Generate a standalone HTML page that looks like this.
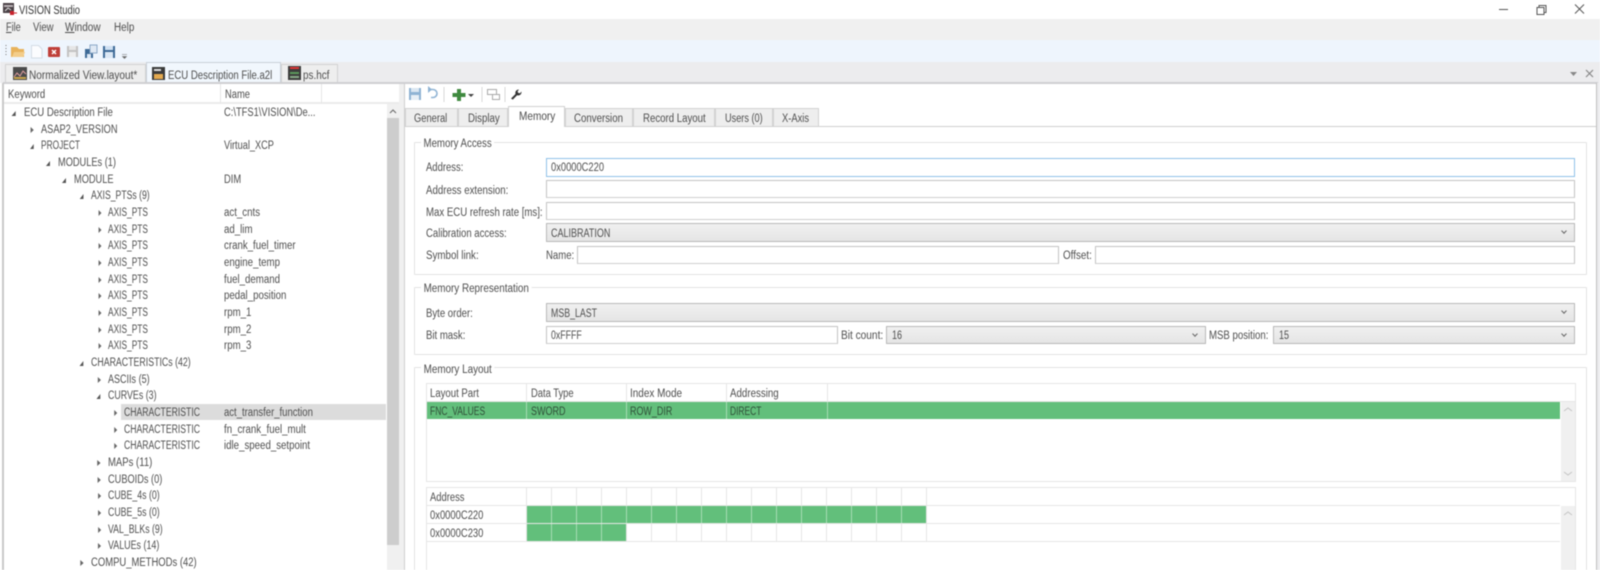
<!DOCTYPE html>
<html><head><meta charset="utf-8"><title>VISION Studio</title>
<style>
html,body{margin:0;padding:0;width:1600px;height:570px;overflow:hidden;background:#fff}
body{position:relative;font-family:"Liberation Sans",sans-serif;font-size:11.5px;color:#4e4e4e}
div,svg{position:absolute;box-sizing:border-box}
#w{left:0;top:0;width:1600px;height:570px;overflow:hidden;filter:blur(.4px)}
.t{height:16px;line-height:16px;margin-top:.8px;white-space:nowrap;transform:scaleX(calc(var(--s,.87)*.9565));transform-origin:0 50%}
.r::before{content:"";position:absolute;width:0;height:0}
.c::before{left:-13px;top:5px;border-left:4px solid #666;border-top:3px solid transparent;border-bottom:3px solid transparent}
.e::before{left:-15px;top:6px;border-bottom:5px solid #555;border-left:5px solid transparent}
.n{--s:.88}
.in{background:#fff;border:1px solid #c4c4c4;border-bottom-color:#cfcfcf}
.cb{background:linear-gradient(#f0f0f0,#e5e5e5);border:1px solid #b9b9b9}
.cb::after{content:"";position:absolute;right:8px;top:5px;width:3px;height:3px;border-right:1px solid #666;border-bottom:1px solid #666;transform:rotate(45deg)}
.g{border:1px solid #e3e3e3;border-radius:1px}
.gt{background:#fff;padding:0 3px}
.tab{background:#eeeeee;border:1px solid #d2d2d2;border-bottom:0;text-align:center}
.ln{background:#e6e6e6}
.vl{background:#e6e6e6;width:1px}
</style></head><body><div id="w">

<!-- title bar -->
<svg style="left:2px;top:1px" width="16" height="16" viewBox="0 0 16 16"><rect x="1" y="2" width="11" height="10" fill="#4a4146"/><rect x="2" y="4" width="9" height="2" fill="#b9b2b5"/><path d="M3 10 L6 7 L9 9" stroke="#ddd" fill="none"/><rect x="8" y="10" width="4" height="4" fill="#c8232c"/><path d="M12 12h3" stroke="#c8232c"/></svg>
<div class="t" style="left:19px;top:2px;color:#333;--s:.853">VISION Studio</div>
<svg style="left:1490px;top:3px" width="106" height="14" viewBox="0 0 106 14"><path d="M9 6.500H18" stroke="#555" fill="none"/><path d="M47 4.500h7v7h-7zM49 4.500V2.500h7v7h-2" stroke="#555" fill="none"/><path d="M85 1.500l9 9M94 1.500l-9 9" stroke="#555" fill="none"/></svg>

<!-- menu -->
<div style="left:0;top:19px;width:1600px;height:21px;background:#f0f0f0"></div>
<div class="t" style="left:6px;top:19px;--s:.83"><u>F</u>ile</div>
<div class="t" style="left:32.700px;top:19px;--s:.868">View</div>
<div class="t" style="left:65.300px;top:19px;--s:.91"><u>W</u>indow</div>
<div class="t" style="left:113.700px;top:19px;--s:.898">Help</div>

<!-- toolbar -->
<div style="left:0;top:40px;width:1600px;height:22px;background:#eef5fd"></div>
<svg style="left:4px;top:42px" width="126" height="18" viewBox="0 0 126 18">
<path d="M2 3v1M2 6v1M2 9v1M2 12v1" stroke="#777" fill="none"/>
<path d="M7 5h6l2 2h5v8H7z" fill="#e8b35c"/><path d="M8 15l2-5h11l-2 5z" fill="#f3cd8a"/>
<path d="M27.500 3.500h7l3.500 3.500v9H27.500z" fill="#fbfcfe" stroke="#d4dce5"/>
<rect x="44" y="5" width="12" height="10" rx="1" fill="#bf3f39"/><path d="M48 8l4 4M52 8l-4 4" stroke="#fff" stroke-width="1.500"/>
<path d="M63 4h11v11H63z" fill="#c2c2c2"/><rect x="65" y="4" width="7" height="4" fill="#e6e6e6"/><rect x="65" y="10" width="7" height="5" fill="#eee"/>
<path d="M81 7h8v9H81z" fill="#3d6a96"/><rect x="83" y="12" width="4" height="4" fill="#dce8f5"/><rect x="86" y="3" width="7" height="8" fill="#dfe9f4" stroke="#8ba8c6"/>
<path d="M99 4h12v12H99z" fill="#3d6a96"/><rect x="101" y="4" width="8" height="4" fill="#cfe0f2"/><rect x="101" y="10" width="8" height="6" fill="#dce8f5"/>
<path d="M118 12.500h5M118.500 14.500h4l-2 2z" fill="#666" stroke="#666" stroke-width=".6"/>
</svg>

<!-- doc tabs strip -->
<div style="left:0;top:62px;width:1600px;height:21px;background:#ececee"></div>
<div class="tab" style="left:5px;top:64px;width:141px;height:19px"></div>
<div style="left:146px;top:62px;width:135px;height:22px;background:#f1f7fd;border:1px solid #c9d0d8;border-bottom:0"></div>
<div class="tab" style="left:281px;top:64px;width:57px;height:19px"></div>
<svg style="left:13px;top:67px" width="15" height="14"><rect width="14" height="13" y="0" fill="#4b4b4b"/><path d="M1 10L4 6l3 3 3-5 3 3" stroke="#e4a0a0" fill="none"/><rect x="1" y="10" width="12" height="2" fill="#c9a54b"/></svg>
<svg style="left:152px;top:67px" width="14" height="14"><rect width="13" height="13" fill="#3a3a3a"/><rect x="2" y="7" width="9" height="5" fill="#e3a94f"/><rect x="2" y="2" width="7" height="2" fill="#ddd"/></svg>
<svg style="left:288px;top:66px" width="14" height="15"><rect width="13" height="14" fill="#3c3c3c"/><rect x="2" y="1" width="9" height="2" fill="#d33"/><rect x="2" y="6" width="9" height="2" fill="#5c9a5c"/><rect x="2" y="10" width="9" height="2" fill="#8a8"/></svg>
<div class="t" style="left:29px;top:67px;--s:.915">Normalized View.layout*</div>
<div class="t" style="left:168px;top:67px">ECU Description File.a2l</div>
<div class="t" style="left:303px;top:67px;--s:.9">ps.hcf</div>
<svg style="left:1568px;top:68px" width="28" height="12"><path d="M2 4h7L5.500 8z" fill="#888"/><path d="M18 2l7 7M25 2l-7 7" stroke="#888" stroke-width="1.200" fill="none"/></svg>

<!-- main frame -->
<div style="left:3px;top:82px;width:1595px;height:2px;background:#cfcfd2"></div>
<div style="left:2px;top:83px;width:2px;height:487px;background:#c9c9c9"></div>
<div style="left:1596px;top:83px;width:1px;height:487px;background:#c0c0c0"></div>
<div style="left:1597px;top:83px;width:3px;height:487px;background:#ececee"></div>

<!-- tree header -->
<div style="left:4px;top:102px;width:395px;height:2px;background:#ebebeb"></div>
<div class="vl" style="left:220px;top:84px;height:19px"></div>
<div class="vl" style="left:321px;top:84px;height:19px"></div>
<div class="t" style="left:8px;top:86px">Keyword</div>
<div class="t" style="left:225px;top:86px;--s:.85">Name</div>

<!-- scrollbar -->
<div style="left:387px;top:104px;width:12px;height:466px;background:#f0f0f0"></div>
<div style="left:387px;top:118px;width:12px;height:427px;background:#cdcdcd"></div>
<svg style="left:388px;top:108px" width="10" height="8"><path d="M2 5l3-3 3 3" stroke="#666" fill="none"/></svg>
<div style="left:399px;top:84px;width:5px;height:486px;background:#f0f0f0"></div>
<div style="left:404px;top:84px;width:1px;height:486px;background:#cfcfcf"></div>

<!-- selection -->
<div style="left:121px;top:404px;width:265px;height:16px;background:#dcdcdc"></div>

<!-- tree rows -->
<div class="t r e" style="left:24px;top:104.300px">ECU Description File</div><div class="t" style="left:224px;top:104.300px;--s:.85">C:\TFS1\VISION\De...</div>
<div class="t r c" style="left:41px;top:121px;--s:.84">ASAP2_VERSION</div>
<div class="t r e" style="left:41px;top:137.600px;--s:.76">PROJECT</div><div class="t" style="left:224px;top:137.600px;--s:.835">Virtual_XCP</div>
<div class="t r e" style="left:58px;top:154.300px;--s:.84">MODULEs (1)</div>
<div class="t r e" style="left:74px;top:171px;--s:.84">MODULE</div><div class="t" style="left:224px;top:171px;--s:.85">DIM</div>
<div class="t r e" style="left:91px;top:187.600px;--s:.787">AXIS_PTSs (9)</div>
<div class="t r c" style="left:108px;top:204.300px;--s:.76">AXIS_PTS</div><div class="t n" style="left:224px;top:204.300px">act_cnts</div>
<div class="t r c" style="left:108px;top:221px;--s:.76">AXIS_PTS</div><div class="t n" style="left:224px;top:221px">ad_lim</div>
<div class="t r c" style="left:108px;top:237.600px;--s:.76">AXIS_PTS</div><div class="t n" style="left:224px;top:237.600px">crank_fuel_timer</div>
<div class="t r c" style="left:108px;top:254.300px;--s:.76">AXIS_PTS</div><div class="t n" style="left:224px;top:254.300px">engine_temp</div>
<div class="t r c" style="left:108px;top:271px;--s:.76">AXIS_PTS</div><div class="t n" style="left:224px;top:271px">fuel_demand</div>
<div class="t r c" style="left:108px;top:287.600px;--s:.76">AXIS_PTS</div><div class="t n" style="left:224px;top:287.600px">pedal_position</div>
<div class="t r c" style="left:108px;top:304.300px;--s:.76">AXIS_PTS</div><div class="t n" style="left:224px;top:304.300px">rpm_1</div>
<div class="t r c" style="left:108px;top:321px;--s:.76">AXIS_PTS</div><div class="t n" style="left:224px;top:321px">rpm_2</div>
<div class="t r c" style="left:108px;top:337.600px;--s:.76">AXIS_PTS</div><div class="t n" style="left:224px;top:337.600px">rpm_3</div>
<div class="t r e" style="left:91px;top:354.300px;--s:.8">CHARACTERISTICs (42)</div>
<div class="t r c" style="left:108px;top:371px;--s:.82">ASCIIs (5)</div>
<div class="t r e" style="left:108px;top:387.600px;--s:.805">CURVEs (3)</div>
<div class="t r c" style="left:124px;top:404.300px;--s:.787">CHARACTERISTIC</div><div class="t n" style="left:224px;top:404.300px;--s:.865">act_transfer_function</div>
<div class="t r c" style="left:124px;top:421px;--s:.787">CHARACTERISTIC</div><div class="t n" style="left:224px;top:421px">fn_crank_fuel_mult</div>
<div class="t r c" style="left:124px;top:437.600px;--s:.787">CHARACTERISTIC</div><div class="t n" style="left:224px;top:437.600px">idle_speed_setpoint</div>
<div class="t r c" style="left:108px;top:454.300px;--s:.866">MAPs (11)</div>
<div class="t r c" style="left:108px;top:471px;--s:.838">CUBOIDs (0)</div>
<div class="t r c" style="left:108px;top:487.600px;--s:.798">CUBE_4s (0)</div>
<div class="t r c" style="left:108px;top:504.300px;--s:.798">CUBE_5s (0)</div>
<div class="t r c" style="left:108px;top:521px;--s:.794">VAL_BLKs (9)</div>
<div class="t r c" style="left:108px;top:537.600px;--s:.81">VALUEs (14)</div>
<div class="t r c" style="left:91px;top:554.300px;--s:.86">COMPU_METHODs (42)</div>

<!-- right toolbar -->
<svg style="left:408px;top:84px" width="120" height="22" viewBox="0 0 120 22">
<path d="M1 4h12v12H1z" fill="#8fb3d4"/><rect x="3" y="4" width="8" height="4" fill="#dbe7f2"/><rect x="3" y="11" width="8" height="5" fill="#e7eff6"/>
<path d="M21 5.500h4a4 4 0 0 1 0 8h-2" stroke="#8fb3d4" stroke-width="1.600" fill="none"/><path d="M20 2v7l4-3.500z" fill="#8fb3d4"/>
<path d="M36 3v15" stroke="#d8d8d8"/>
<path d="M49 5h4v4h4.500v4h-4.500v4h-4v-4h-4.500v-4h4.500z" fill="#3f8a3f"/>
<path d="M60 10h6l-3 3z" fill="#444"/>
<path d="M74 3v15" stroke="#d8d8d8"/>
<path d="M79.500 5.500h9v5h-9zM84.500 10.500h7v5h-7z" fill="#fff" stroke="#a9a9a9"/>
<path d="M97 3v15" stroke="#d8d8d8"/>
<path d="M103 14.500l4.500-4.500c-.7-2.300.8-4.500 3.500-4.500l-1.500 2 .8 1.500 1.700.3 1.500-1.800c.3 2.800-2 4.500-4.400 3.800l-4.300 4.300z" fill="#333"/>
</svg>

<!-- property tabs -->
<div style="left:405px;top:126px;width:1191px;height:1px;background:#d0d0d0"></div>
<div class="tab" style="left:405px;top:108px;width:53px;height:18px"></div>
<div class="tab" style="left:458px;top:108px;width:50px;height:18px"></div>
<div style="left:508px;top:106px;width:57px;height:21px;background:#fff;border:1px solid #d0d0d0;border-bottom:0"></div>
<div class="tab" style="left:565px;top:108px;width:68px;height:18px"></div>
<div class="tab" style="left:633px;top:108px;width:82px;height:18px"></div>
<div class="tab" style="left:715px;top:108px;width:58px;height:18px"></div>
<div class="tab" style="left:773px;top:108px;width:46px;height:18px"></div>
<div class="t" style="left:414px;top:110px;--s:.85">General</div>
<div class="t" style="left:467.700px;top:110px;--s:.88">Display</div>
<div class="t" style="left:518.700px;top:108px;--s:.914">Memory</div>
<div class="t" style="left:574px;top:110px;--s:.88">Conversion</div>
<div class="t" style="left:642.700px;top:110px;--s:.876">Record Layout</div>
<div class="t" style="left:725px;top:110px;--s:.833">Users (0)</div>
<div class="t" style="left:782px;top:110px;--s:.85">X-Axis</div>

<!-- group 1 -->
<div class="g" style="left:414px;top:142px;width:1173px;height:133px"></div>
<div class="gt t" style="left:421px;top:135px;--s:.878">Memory Access</div>
<div class="t" style="left:426px;top:159px;--s:.86">Address:</div>
<div class="in" style="left:546px;top:158px;width:1029px;height:19px;border-color:#8fc1e8"></div>
<div class="t" style="left:551px;top:159px;--s:.85">0x0000C220</div>
<div class="t" style="left:426px;top:182px;--s:.88">Address extension:</div>
<div class="in" style="left:546px;top:180px;width:1029px;height:18px"></div>
<div class="t" style="left:426px;top:204px;--s:.875">Max ECU refresh rate [ms]:</div>
<div class="in" style="left:546px;top:202px;width:1029px;height:18px"></div>
<div class="t" style="left:426px;top:225px;--s:.868">Calibration access:</div>
<div class="cb" style="left:546px;top:223px;width:1029px;height:19px"></div>
<div class="t" style="left:551px;top:225px;--s:.818">CALIBRATION</div>
<div class="t" style="left:426px;top:247px;--s:.888">Symbol link:</div>
<div class="t" style="left:546px;top:247px">Name:</div>
<div class="in" style="left:577px;top:246px;width:482px;height:18px"></div>
<div class="t" style="left:1063px;top:247px;--s:.895">Offset:</div>
<div class="in" style="left:1095px;top:246px;width:480px;height:18px"></div>

<!-- group 2 -->
<div class="g" style="left:414px;top:287px;width:1173px;height:68px"></div>
<div class="gt t" style="left:421px;top:280px;--s:.897">Memory Representation</div>
<div class="t" style="left:426px;top:305px">Byte order:</div>
<div class="cb" style="left:546px;top:303px;width:1029px;height:19px"></div>
<div class="t" style="left:551px;top:305px;--s:.8">MSB_LAST</div>
<div class="t" style="left:426px;top:327px">Bit mask:</div>
<div class="in" style="left:546px;top:326px;width:292px;height:18px"></div>
<div class="t" style="left:551px;top:327px;--s:.8">0xFFFF</div>
<div class="t" style="left:841px;top:327px;--s:.92">Bit count:</div>
<div class="cb" style="left:886px;top:326px;width:320px;height:18px"></div>
<div class="t" style="left:891.500px;top:327px;--s:.82">16</div>
<div class="t" style="left:1209px;top:327px;--s:.875">MSB position:</div>
<div class="cb" style="left:1273px;top:326px;width:302px;height:18px"></div>
<div class="t" style="left:1278.500px;top:327px;--s:.82">15</div>

<!-- group 3 -->
<div class="g" style="left:414px;top:367px;width:1173px;height:220px"></div>
<div class="gt t" style="left:421px;top:361px;--s:.9">Memory Layout</div>

<!-- table 1 -->
<div style="left:426px;top:383px;width:1150px;height:99px;border:1px solid #e6e6e6;background:#fff"></div>
<div class="ln" style="left:426px;top:401px;width:1150px;height:1px"></div>
<div class="vl" style="left:526px;top:383px;height:19px"></div>
<div class="vl" style="left:626px;top:383px;height:19px"></div>
<div class="vl" style="left:726px;top:383px;height:19px"></div>
<div class="vl" style="left:827px;top:383px;height:19px"></div>
<div class="t" style="left:430px;top:385px">Layout Part</div>
<div class="t" style="left:531px;top:385px;--s:.853">Data Type</div>
<div class="t" style="left:630px;top:385px;--s:.905">Index Mode</div>
<div class="t" style="left:730px;top:385px;--s:.885">Addressing</div>
<div style="left:427px;top:402px;width:1133px;height:17px;background:#62bf7b"></div>
<div style="left:526px;top:402px;width:1px;height:17px;background:#a7dcb4"></div>
<div style="left:626px;top:402px;width:1px;height:17px;background:#a7dcb4"></div>
<div style="left:726px;top:402px;width:1px;height:17px;background:#a7dcb4"></div>
<div style="left:827px;top:402px;width:1px;height:17px;background:#a7dcb4"></div>
<div class="t" style="left:430px;top:403px;color:#2f4f38;--s:.773">FNC_VALUES</div>
<div class="t" style="left:531px;top:403px;color:#2f4f38;--s:.818">SWORD</div>
<div class="t" style="left:630px;top:403px;color:#2f4f38;--s:.814">ROW_DIR</div>
<div class="t" style="left:730px;top:403px;color:#2f4f38;--s:.767">DIRECT</div>
<div style="left:1561px;top:402px;width:14px;height:79px;background:#f0f0f0"></div>
<svg style="left:1563px;top:406px" width="10" height="8"><path d="M1 5l4-3 4 3" stroke="#c4c4c4" fill="none"/></svg>
<svg style="left:1563px;top:470px" width="10" height="8"><path d="M1 2l4 3 4-3" stroke="#c4c4c4" fill="none"/></svg>

<!-- table 2 -->
<div style="left:426px;top:487px;width:1150px;height:90px;border:1px solid #e6e6e6;background:#fff"></div>
<div class="ln" style="left:426px;top:505px;width:1134px;height:1px"></div>
<div class="ln" style="left:426px;top:523px;width:1134px;height:1px"></div>
<div class="ln" style="left:426px;top:541px;width:1134px;height:1px"></div>
<div class="t" style="left:430px;top:489px;--s:.855">Address</div>
<div class="t" style="left:430px;top:507.700px;--s:.856">0x0000C220</div>
<div class="t" style="left:430px;top:525.300px;--s:.856">0x0000C230</div>
<div style="left:526px;top:506px;width:401px;height:17px;background:#62bf7b"></div>
<div style="left:526px;top:524px;width:100px;height:17px;background:#62bf7b"></div>
<svg style="left:526px;top:487px" width="410" height="55"><path d="M0.500 0V54M25.500 0V54M50.500 0V54M75.500 0V54M100.500 0V54M125.500 0V54M150.500 0V54M175.500 0V54M200.500 0V54M225.500 0V54M250.500 0V54M275.500 0V54M300.500 0V54M325.500 0V54M350.500 0V54M375.500 0V54M400.500 0V54" stroke="#e6e6e6" fill="none"/></svg>
<svg style="left:526px;top:506px" width="410" height="36"><path d="M25.500 0V17M50.500 0V17M75.500 0V17M100.500 0V17M125.500 0V17M150.500 0V17M175.500 0V17M200.500 0V17M225.500 0V17M250.500 0V17M275.500 0V17M300.500 0V17M325.500 0V17M350.500 0V17M375.500 0V17M25.500 18V35M50.500 18V35M75.500 18V35" stroke="#a7dcb4" fill="none"/></svg>
<div style="left:1561px;top:506px;width:14px;height:64px;background:#f0f0f0"></div>
<svg style="left:1563px;top:510px" width="10" height="8"><path d="M1 5l4-3 4 3" stroke="#c4c4c4" fill="none"/></svg>

</div></body></html>
